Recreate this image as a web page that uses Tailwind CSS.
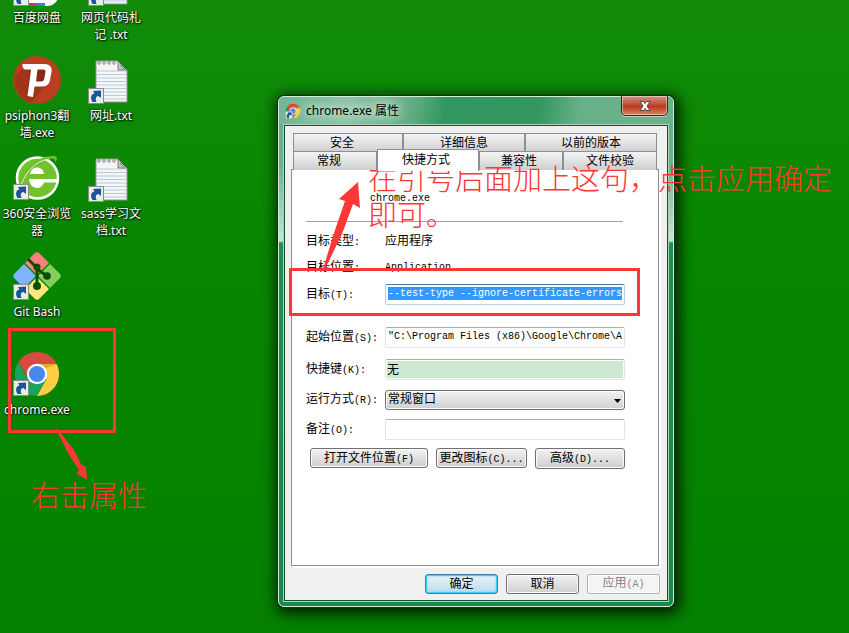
<!DOCTYPE html>
<html lang="zh-CN">
<head>
    <meta charset="UTF-8">
    <meta name="viewport" content="width=device-width, initial-scale=1.0">
    <title>chrome.exe 属性</title>
    <script src="https://cdn.jsdelivr.net/npm/@tailwindcss/browser@4"></script>
</head>
<body class="relative h-screen overflow-hidden bg-linear-to-b from-[#128b0b] via-[#078601] via-40% to-[#058000] font-['Noto_Sans','Noto_Sans_CJK_SC',sans-serif] text-[12px]">

    <!-- Shared icons -->
    <svg class="hidden" aria-hidden="true">
        <symbol id="shortcut" viewBox="0 0 16 16">
            <rect x=".5" y=".5" width="15" height="15" fill="#e3f0e6" stroke="#8b8b8b" />
            <path d="M4.500 14C2 10 3 6 6.500 5.500L5 3L13 2.500V10L10.500 8C8 8.500 7 10 8.500 14Z" fill="#1d5398" />
        </symbol>
        <symbol id="document" viewBox="0 0 48 48">
            <path d="M9 5H31L40 14V46H9Z" fill="#f5f5f7" stroke="#8f9894" />
            <path d="M10 15H39M10 18.500H39M10 22H39M10 25.500H39M10 29H39M10 32.500H39M10 36H39M10 39.500H39M10 43H39" stroke="#b3cddd" />
            <path d="M31 5V14H40Z" fill="#c3c6c8" stroke="#666" stroke-width=".8" />
            <path d="M33 9L37 13M34 8L39 13" stroke="#555" stroke-width=".7" />
            <g fill="#eee" stroke="#777" stroke-width=".8">
                <circle cx="12" cy="7" r="1.300" /><circle cx="17" cy="7" r="1.300" /><circle cx="22" cy="7" r="1.300" /><circle cx="27" cy="7" r="1.300" />
            </g>
        </symbol>
        <symbol id="chrome" viewBox="0 0 48 48">
            <path d="M24 14H43.600A22 22 0 0 1 24 46L33 29Z" fill="#ffcd42" />
            <path d="M5.500 12.200A22 22 0 0 0 24 46L33.500 29L14.500 29Z" fill="#1ca362" />
            <path d="M15 29L6 13.500L14 17Z" fill="#138350" />
            <path d="M5.500 12.200L15.500 29L24 14H43.600A22 22 0 0 0 5.500 12.200Z" fill="#da4b3f" />
            <path d="M24 14H43.600L33 18Z" fill="#e5a92f" />
            <circle cx="24" cy="24" r="10.200" fill="#fff" />
            <circle cx="24" cy="24" r="8" fill="#4688f1" />
        </symbol>
    </svg>

    <!-- Desktop icons -->
    <main class="absolute -top-[42px] left-0 grid grid-flow-col grid-cols-[74px_74px] grid-rows-[repeat(5,98px)] text-center leading-[17px] text-white [text-shadow:1px_1px_2px_#000,0_0_2px_#000]">
        <div class="flex flex-col items-center gap-[3px]">
            <svg class="size-12" viewBox="0 0 48 48">
                <rect x="4" y="4" width="42" height="44" rx="12" fill="#fff" />
                <path d="M16 45H23V48H16Z" fill="#e8323a" /><path d="M23 45H32V48H23Z" fill="#3b7de8" />
                <use href="#shortcut" y="32" width="16" height="16" />
            </svg>
            <span>百度网盘</span>
        </div>
        <div class="flex flex-col items-center gap-[3px]">
            <svg class="size-12" viewBox="0 0 48 48">
                <circle cx="24" cy="24" r="24" fill="#ba3f21" />
                <path d="M10 12L2 20A24 24 0 0 0 18 47L32 30L38 12Z" fill="#a23519" />
                <path d="M17 14L33 13L34 27L22 30L14 36Z" fill="#842a16" />
                <path d="M9.500 8H31C36.500 8 39.500 11 38.500 16L37 24C36 29 33 30.500 28 30.500H21.500L20 41L14.500 40L18 13.500H13C10.500 13.500 9.500 12 9.500 8ZM24.500 13.500L23 25.500H28C30 25.500 31 24.500 31.300 22.500L32.400 16.500C32.700 14.500 32 13.500 30 13.500Z" fill="#fff" fill-rule="evenodd" />
            </svg>
            <span>psiphon3翻<br>墙.exe</span>
        </div>
        <div class="flex flex-col items-center gap-[3px]">
            <svg class="size-12" viewBox="0 0 48 48">
                <circle cx="24.500" cy="24" r="20.500" fill="#72c22c" stroke="#fff" stroke-width="2.500" />
                <path d="M17 20C18 15.500 21 13.500 24 13.500C28 13.500 30.500 16 31 20Z" fill="#fff" />
                <path d="M16 25H44V28.500H31C30 32 27 34 24 34C19.500 34 16.500 30 16 25Z" fill="#fff" />
                <path d="M7 31C10 14 25 1 42 2C45 3 44 6 42 9C43 5 40 4 37 5C23 6 13 17 7 31Z" fill="#6cbd2f" />
                <path d="M8 31C14 16 23 7 36 5" fill="none" stroke="#e4f6cf" />
                <use href="#shortcut" y="30" width="16" height="16" />
            </svg>
            <span>360安全浏览<br>器</span>
        </div>
        <div class="flex flex-col items-center gap-[3px]">
            <svg class="size-12" viewBox="0 0 48 48">
                <path d="M21.500 1.500Q24 -1 26.500 1.500L36 11L24 23L12 11Z" fill="#ff7f7f" />
                <path d="M11 12L23 24L11 36L1.500 26.500Q-1 24 1.500 21.500Z" fill="#80b3ff" />
                <path d="M37 12L46.500 21.500Q49 24 46.500 26.500L37 36L25 24Z" fill="#87cd5c" />
                <path d="M24 25L36 37L26.500 46.500Q24 49 21.500 46.500L12 37Z" fill="#ffe680" />
                <path d="M15 7L24 16V34M24 17L34 24" fill="none" stroke="#084f05" stroke-width="3" />
                <circle cx="24" cy="15" r="3.500" fill="#084f05" /><circle cx="34" cy="24" r="3.800" fill="#084f05" /><circle cx="24" cy="34" r="4" fill="#084f05" />
                <use href="#shortcut" y="32" width="16" height="16" />
            </svg>
            <span>Git Bash</span>
        </div>
        <div class="flex flex-col items-center gap-[3px]">
            <svg class="size-12" viewBox="0 0 48 48">
                <use href="#chrome" width="48" height="48" />
                <use href="#shortcut" y="30" width="16" height="16" />
            </svg>
            <span>chrome.exe</span>
        </div>
        <div class="flex flex-col items-center gap-[3px]">
            <svg class="size-12" viewBox="0 0 48 48">
                <use href="#document" width="48" height="48" />
                <use href="#shortcut" x="1" y="32" width="16" height="16" />
            </svg>
            <span>网页代码札<br>记 .txt</span>
        </div>
        <div class="flex flex-col items-center gap-[3px]">
            <svg class="size-12" viewBox="0 0 48 48">
                <use href="#document" width="48" height="48" />
                <use href="#shortcut" x="1" y="32" width="16" height="16" />
            </svg>
            <span>网址.txt</span>
        </div>
        <div class="flex flex-col items-center gap-[3px]">
            <svg class="size-12" viewBox="0 0 48 48">
                <use href="#document" width="48" height="48" />
                <use href="#shortcut" x="1" y="32" width="16" height="16" />
            </svg>
            <span>sass学习文<br>档.txt</span>
        </div>
    </main>

    <!-- Properties window -->
    <section class="absolute top-24 left-[278px] w-[396px] rounded-md border border-[#d5ebdd] bg-[linear-gradient(180deg,#62ad83_0,#6db38b_70px,#c8e5d4_144px,#1d9150_146px,#178a49_100%)] shadow-[0_0_0_1px_#06351a,2px_3px_14px_4px_rgba(0,0,0,0.75)]">
        <header class="flex h-[27px] items-center gap-[5px] rounded-t-md bg-[linear-gradient(100deg,#72b592_0%,#8cc4a4_18%,#62ac83_34%,#319760_42%,#33985f_66%,#68b088_76%,#6bb28a_100%)] pr-[5px] pl-[6px]">
            <svg class="size-4" viewBox="0 0 48 48">
                <use href="#chrome" width="48" height="48" />
                <use href="#shortcut" y="24" width="24" height="24" />
            </svg>
            <h1 class="grow text-[12px] [text-shadow:0_0_8px_#fff,0_0_14px_#fff]">chrome.exe 属性</h1>
            <button type="button" aria-label="关闭" class="-mt-px flex h-5 w-[47px] items-center justify-center self-start rounded-b-[5px] border border-t-0 border-[#43201a] bg-linear-to-b from-[#cf9585] from-0% via-[#b9391c] via-55% to-[#d9825f] shadow-[inset_0_0_0_1px_rgba(255,255,255,0.45),0_1px_0_rgba(255,255,255,0.5)]">
                <svg class="h-[10px] w-3" viewBox="0 0 12 10">
                    <path d="M1 .5H4.500L6 2.500L7.500 .5H11L8 5L11 9.500H7.500L6 7.500L4.500 9.500H1L4 5Z" fill="#fff" stroke="#534547" />
                </svg>
            </button>
        </header>

        <div class="mx-1 mb-1 border border-[#a9d3bb]">
            <div class="border border-[#12532f] bg-[#f0f0f0] pt-[7px] pr-2 pb-[6px] pl-[6px] font-['Liberation_Mono','Noto_Sans_CJK_SC',monospace]">
                <div role="tablist" class="px-[2px]">
                    <div class="grid h-[18px] grid-cols-[110fr_122fr_132fr]">
                        <button type="button" role="tab" class="border border-b-0 border-[#8c8e99] bg-linear-to-b from-[#f4f4f4] to-[#cfcfcf] pt-[2px] pr-3 leading-4">安全</button>
                        <button type="button" role="tab" class="border border-b-0 border-[#8c8e99] bg-linear-to-b from-[#f4f4f4] to-[#cfcfcf] pt-[2px] leading-4">详细信息</button>
                        <button type="button" role="tab" class="border border-b-0 border-[#8c8e99] bg-linear-to-b from-[#f4f4f4] to-[#cfcfcf] pt-[2px] leading-4">以前的版本</button>
                    </div>
                    <div class="grid h-[18px] grid-cols-[84fr_102fr_84fr_94fr]">
                        <button type="button" role="tab" class="border border-b-0 border-[#8c8e99] bg-linear-to-b from-[#f4f4f4] to-[#cfcfcf] pt-[2px] pr-3 leading-4">常规</button>
                        <button type="button" role="tab" aria-selected="true" class="z-10 -mt-[2px] -mb-px border border-b-0 border-[#8c8e99] bg-white pr-1 leading-4">快捷方式</button>
                        <button type="button" role="tab" class="border border-b-0 border-[#8c8e99] bg-linear-to-b from-[#f4f4f4] to-[#cfcfcf] pt-[2px] pr-1 leading-4">兼容性</button>
                        <button type="button" role="tab" class="border border-b-0 border-[#8c8e99] bg-linear-to-b from-[#f4f4f4] to-[#cfcfcf] pt-[2px] leading-4">文件校验</button>
                    </div>
                </div>

                <form class="border border-[#8c8e99] bg-white pt-[18px] pr-[33px] pb-24 pl-[14px] shadow-[2px_2px_0_#fff]">
                    <p class="pl-16 text-[10px] leading-[22px]">chrome.exe</p>
                    <hr class="mt-[11px] mr-[2px] border-[#a0a0a0]">

                    <div class="mt-[9px] grid h-[21px] grid-cols-[79px_1fr] items-center">
                        <span>目标类型<span class="text-[10px]">:</span></span>
                        <span>应用程序</span>
                    </div>
                    <div class="mt-[5px] grid h-[21px] grid-cols-[79px_1fr] items-center">
                        <span>目标位置<span class="text-[10px]">:</span></span>
                        <span class="text-[10px]">Application</span>
                    </div>
                    <div class="mt-[6px] grid h-[21px] grid-cols-[79px_1fr] items-center">
                        <label for="target">目标<span class="text-[10px]">(T):</span></label>
                        <div class="flex h-[21px] rounded-[2px] border border-[#b5d3e7] border-t-[#3d7bad] px-[2px] pt-[2px] pb-[4px]">
                            <input id="target" type="text" value="--test-type --ignore-certificate-errors" class="w-full bg-[#3399ff] text-[10px] text-white outline-none">
                        </div>
                    </div>
                    <div class="mt-[22px] grid h-[21px] grid-cols-[79px_1fr] items-center">
                        <label for="start">起始位置<span class="text-[10px]">(S):</span></label>
                        <input id="start" type="text" value="&quot;C:\Program Files (x86)\Google\Chrome\Application&quot;" class="h-[21px] w-full min-w-0 rounded-[2px] border border-[#e2e3ea] border-t-[#abadb3] px-[2px] pb-[2px] text-[10px]">
                    </div>
                    <div class="mt-[11px] grid h-[21px] grid-cols-[79px_1fr] items-center">
                        <label for="hotkey">快捷键<span class="text-[10px]">(K):</span></label>
                        <input id="hotkey" type="text" value="无" class="h-[21px] w-full min-w-0 rounded-[2px] border border-[#e2e3ea] border-t-[#abadb3] bg-[#cce8cf] px-px pb-px shadow-[inset_0_0_0_1px_#fff]">
                    </div>
                    <div class="mt-[9px] grid h-[21px] grid-cols-[79px_1fr] items-center">
                        <label for="run">运行方式<span class="text-[10px]">(R):</span></label>
                        <div class="relative">
                            <select id="run" class="block h-5 w-full appearance-none rounded-[3px] border border-[#707070] bg-linear-to-b from-[#f2f2f2] to-[#cfcfcf] px-[2px] pt-px leading-4 shadow-[inset_0_0_0_1px_#fafafa]">
                                <option>常规窗口</option>
                                <option>最小化</option>
                                <option>最大化</option>
                            </select>
                            <svg class="pointer-events-none absolute top-[9px] right-1 h-1 w-[7px]" viewBox="0 0 7 4"><path d="M0 0H7L3.500 4Z" /></svg>
                        </div>
                    </div>
                    <div class="mt-[9px] grid h-[21px] grid-cols-[79px_1fr] items-center">
                        <label for="comment">备注<span class="text-[10px]">(O):</span></label>
                        <input id="comment" type="text" class="h-[21px] w-full min-w-0 rounded-[2px] border border-[#e2e3ea] border-t-[#abadb3] px-[2px]">
                    </div>

                    <div class="mt-2 ml-1 grid grid-cols-[118fr_91fr_90fr] gap-2">
                        <button type="button" class="h-5 rounded-[3px] border border-[#707070] bg-linear-to-b from-[#f2f2f2] to-[#cfcfcf] pt-[2px] leading-4 whitespace-nowrap shadow-[inset_0_0_0_1px_#fafafa]">打开文件位置<span class="text-[10px]">(F)</span></button>
                        <button type="button" class="h-5 rounded-[3px] border border-[#707070] bg-linear-to-b from-[#f2f2f2] to-[#cfcfcf] pt-[2px] leading-4 whitespace-nowrap shadow-[inset_0_0_0_1px_#fafafa]">更改图标<span class="text-[10px]">(C)...</span></button>
                        <button type="button" class="h-[21px] rounded-[3px] border border-[#707070] bg-linear-to-b from-[#f2f2f2] to-[#cfcfcf] pt-[2px] leading-4 whitespace-nowrap shadow-[inset_0_0_0_1px_#fafafa]">高级<span class="text-[10px]">(D)...</span></button>
                    </div>
                </form>

                <div class="mt-2 -mr-px flex justify-end gap-2">
                    <button type="button" class="h-5 w-[73px] rounded-[3px] border border-[#3c7fb1] bg-linear-to-b from-[#eaf4f9] to-[#bcdcec] pt-px leading-4 shadow-[inset_0_0_0_1px_#3fcdf5,inset_0_0_2px_1px_#5bd7f8]">确定</button>
                    <button type="button" class="h-5 w-[73px] rounded-[3px] border border-[#707070] bg-linear-to-b from-[#f2f2f2] to-[#cfcfcf] pt-px leading-4 shadow-[inset_0_0_0_1px_#fafafa]">取消</button>
                    <button type="button" disabled class="h-5 w-[73px] rounded-[3px] border border-[#adb2b5] bg-[#f4f4f4] pt-px leading-4 text-[#838383] shadow-[inset_0_0_0_1px_#fcfcfc]">应用<span class="text-[10px]">(A)</span></button>
                </div>
            </div>
        </div>
    </section>

    <!-- Annotations on top of the desktop -->
    <div class="pointer-events-none absolute top-[328px] left-2 h-[105px] w-[108px] border-3 border-[#ff3636]"></div>
    <div class="pointer-events-none absolute top-[268px] left-[289px] h-12 w-[351px] border-3 border-[#ff3636]"></div>
    <svg class="pointer-events-none absolute top-0 left-0 h-[500px] w-[400px]" viewBox="0 0 400 500" fill="#ff3636">
        <path d="M358 182L360 208L353 204L342 234L325 269H323L335 230L345 201L339 199Z" />
        <path d="M55 427L60 432L74 450L81 464L86 467L87 480L76 473L79 470L68 453Z" />
    </svg>
    <p class="pointer-events-none absolute top-[159px] left-[368px] font-['Noto_Sans_CJK_SC',sans-serif] text-[29px] leading-9 font-light whitespace-nowrap text-[#ff3636]">在引号后面加上这句，点击应用确定<br>即可。</p>
    <p class="pointer-events-none absolute top-[476px] left-[31px] font-['Noto_Sans_CJK_SC',sans-serif] text-[29px] leading-9 font-light whitespace-nowrap text-[#ff3636]">右击属性</p>
</body>
</html>
